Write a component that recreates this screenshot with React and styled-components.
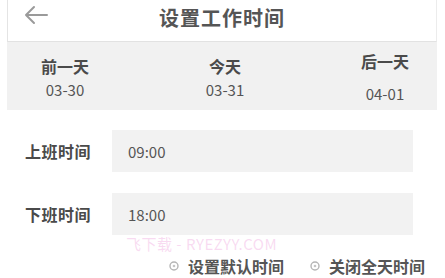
import React from "react";
import styled, { createGlobalStyle } from "styled-components";

const GlobalStyle = createGlobalStyle`
  html, body {
    margin: 0;
    padding: 0;
    background: #ffffff;
  }
  body {
    font-family: "Noto Sans CJK SC", "Noto Sans", "Liberation Sans", sans-serif;
    color: #444;
  }
`;

const days = [
  { label: "前一天", date: "03-30", gap: 6, shift: 0 },
  { label: "今天", date: "03-31", gap: 6, shift: 0 },
  { label: "后一天", date: "04-01", gap: 15, shift: -5 },
];

const rows = [
  { label: "上班时间", value: "09:00" },
  { label: "下班时间", value: "18:00" },
];

function Ring() {
  return (
    <svg width="10" height="10" viewBox="0 0 10 10">
      <circle cx="5" cy="5" r="4" fill="none" stroke="#b5b5b5" strokeWidth="1.4" />
      <circle cx="5" cy="5" r="1.3" fill="#c4c4c4" />
    </svg>
  );
}

export default function App() {
  return (
    <Page>
      <GlobalStyle />
      <Frame>
        <Header>
          <Back>
            <svg width="26" height="20" viewBox="0 0 26 20">
              <path
                d="M24 10H3M11 2L3 10l8 8"
                fill="none"
                stroke="#9a9a9a"
                strokeWidth="2"
                strokeLinecap="round"
                strokeLinejoin="round"
              />
            </svg>
          </Back>
          <Title>设置工作时间</Title>
        </Header>
        <DayBar>
          {days.map((d) => (
            <DayCol key={d.date} gap={d.gap} shift={d.shift}>
              <DayLabel>{d.label}</DayLabel>
              <DayDate>{d.date}</DayDate>
            </DayCol>
          ))}
        </DayBar>
      </Frame>
      <Form>
        {rows.map((r) => (
          <Row key={r.label}>
            <Label>{r.label}</Label>
            <Field>{r.value}</Field>
          </Row>
        ))}
      </Form>
      <Actions>
        <Action>
          <Ring />
          <span>设置默认时间</span>
        </Action>
        <Action>
          <Ring />
          <span>关闭全天时间</span>
        </Action>
      </Actions>
      <Watermark>飞下载 - RYEZYY.COM</Watermark>
    </Page>
  );
}

const Page = styled.div`
  position: relative;
  width: 445px;
  height: 278px;
  overflow: hidden;
  background: #fff;
`;

const Frame = styled.div`
  margin: 0 8px 0 7px;
`;

const Header = styled.div`
  position: relative;
  height: 41px;
  display: flex;
  align-items: center;
  justify-content: center;
  border-left: 1px solid #e4e4e4;
  border-right: 1px solid #ececec;
  border-bottom: 1px solid #e2e2e2;
  background: #fff;
`;

const Back = styled.div`
  position: absolute;
  left: 15px;
  top: 5px;
  display: flex;
`;

const Title = styled.div`
  font-size: 20px;
  font-weight: 700;
  color: #555;
  letter-spacing: 1px;
  margin-top: -6px;
`;

const DayBar = styled.div`
  height: 68px;
  background: #f1f1f1;
  display: flex;
  justify-content: space-between;
  align-items: flex-start;
  padding: 0 28px 0 34px;
  box-sizing: border-box;
`;

const DayCol = styled.div`
  display: flex;
  flex-direction: column;
  align-items: center;
  gap: ${(p) => p.gap}px;
  margin-top: ${(p) => 15 + p.shift}px;
`;

const DayLabel = styled.div`
  font-size: 16px;
  font-weight: 700;
  line-height: 18px;
  color: #4a4a4a;
`;

const DayDate = styled.div`
  font-size: 15px;
  line-height: 18px;
  color: #555;
`;

const Form = styled.div`
  display: flex;
  flex-direction: column;
  gap: 21px;
  padding: 20px 32px 0 25px;
`;

const Row = styled.div`
  display: flex;
  align-items: center;
`;

const Label = styled.div`
  width: 87px;
  font-size: 16px;
  font-weight: 700;
  color: #4a4a4a;
  letter-spacing: 0.5px;
`;

const Field = styled.div`
  flex: 1;
  height: 42px;
  background: #f2f2f2;
  display: flex;
  align-items: center;
  padding-left: 16px;
  font-size: 15px;
  color: #555;
`;

const Actions = styled.div`
  display: flex;
  justify-content: flex-end;
  gap: 26px;
  padding: 23px 20px 0 0;
`;

const Action = styled.div`
  display: flex;
  align-items: center;
  gap: 9px;
  font-size: 16px;
  font-weight: 700;
  color: #555;
  line-height: 16px;
`;

const Watermark = styled.div`
  position: absolute;
  left: 126px;
  top: 236px;
  font-size: 15px;
  line-height: 16px;
  color: rgba(236, 150, 215, 0.35);
  letter-spacing: 0.5px;
  pointer-events: none;
`;
